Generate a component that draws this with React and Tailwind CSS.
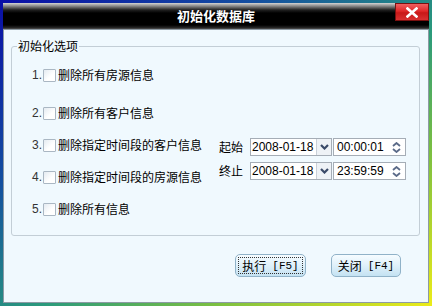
import React from "react";

const CJK = { fontFamily: '"Noto Sans CJK SC", "Liberation Sans", sans-serif' };

function Check() {
  return (
    <span className="ml-[1px] inline-block h-[13px] w-[13px] shrink-0 rounded-[1px] border border-[#aab7c3] bg-[linear-gradient(135deg,#e4ebf1,#ffffff_60%)]" />
  );
}

function Row({ n, text, className }) {
  return (
    <div className={"flex h-[20px] items-center " + (className || "")}>
      <span className="w-[10px] font-['Liberation_Sans'] text-[12px] text-[#333]">{n}.</span>
      <Check />
      <span className="ml-[2px] text-[12px] leading-[14px] text-black" style={CJK}>
        {text}
      </span>
    </div>
  );
}

function DateTime({ label, date, time }) {
  return (
    <div className="flex h-[18px] items-center">
      <span className="w-[31px] text-[12px] leading-[14px] text-black" style={CJK}>
        {label}
      </span>
      <div className="flex h-[18px] w-[82px] items-center border border-[#a5adb6] bg-white">
        <span className="flex-1 pl-[1px] font-['Liberation_Sans'] text-[12px] leading-[14px] text-black">{date}</span>
        <span className="flex h-full w-[15px] items-center justify-center border-l border-[#c9d0d8] bg-[#eef2f6]">
          <svg width="9" height="6" viewBox="0 0 9 6">
            <path d="M1 1 L4.5 4.5 L8 1" fill="none" stroke="#3a4a68" strokeWidth="2.2" />
          </svg>
        </span>
      </div>
      <div className="ml-[1px] flex h-[18px] w-[73px] items-center border border-[#a5adb6] bg-white">
        <span className="flex-1 pl-[3px] font-['Liberation_Sans'] text-[12px] leading-[14px] text-black">{time}</span>
        <span className="mr-[2px] flex h-full w-[13px] flex-col items-center justify-center gap-[1px]">
          <svg width="9" height="5" viewBox="0 0 9 5">
            <path d="M1 4 L4.5 1 L8 4" fill="none" stroke="#5a6a88" strokeWidth="1.8" />
          </svg>
          <svg width="9" height="5" viewBox="0 0 9 5">
            <path d="M1 1 L4.5 4 L8 1" fill="none" stroke="#5a6a88" strokeWidth="1.8" />
          </svg>
        </span>
      </div>
    </div>
  );
}

function Btn({ cjk, key_, focused, className }) {
  return (
    <button
      className={
        "flex h-[23px] items-center justify-center rounded-[5px] border border-[#90b2c8] bg-[linear-gradient(#f6fcff,#e2f2fb_45%,#c4e2f2)] p-[2px] " +
        className
      }
    >
      <span
        className={
          "flex h-full w-full items-center justify-center leading-[14px] text-black " +
          (focused ? "border border-dotted border-[#333]" : "border border-transparent")
        }
      >
        <span className="text-[12px]" style={CJK}>{cjk}</span>
        <span className="ml-[6px] font-['Liberation_Mono'] text-[11px]">{key_}</span>
      </span>
    </button>
  );
}

export default function App() {
  return (
    <div className="h-[306px] w-[432px] bg-[linear-gradient(to_bottom_right,#0a0ea6_0%,#1450a0_30%,#2a9a7c_55%,#7cc040_75%,#ecec18_100%)] p-[3px]">
      <div className="flex h-full flex-col">
        <div className="relative flex h-[26px] items-center justify-center bg-[linear-gradient(#d4d4d4_0px,#8a8a8a_3px,#202020_7px,#000000_10px,#000000_22px,#2a2a2a_25px,#5a5a5a_26px)]">
          <span className="pb-[1px] text-[13px] font-bold leading-[15px] text-white" style={CJK}>
            初始化数据库
          </span>
          <div className="absolute right-0 top-0 flex h-[18px] w-[34px] items-center justify-center border border-[#7a1010] bg-[linear-gradient(#f06060,#e02828_45%,#c81818_55%,#d83030)]">
            <svg width="12" height="11" viewBox="0 0 12 11">
              <path d="M1.5 1.5 L10.5 9.5 M10.5 1.5 L1.5 9.5" stroke="#ffffff" strokeWidth="2.6" strokeLinecap="square" />
            </svg>
          </div>
        </div>

        <div className="flex flex-1 flex-col border border-[#8d9aa4] bg-[#f0f9fe]">
          <fieldset className="ml-[7px] mr-[8px] mt-[9px] rounded-[3px] border border-[#c3ced6] px-0 pb-[16px] pt-0">
            <legend className="ml-[5px] px-[1px] text-[12px] leading-[14px] text-black" style={CJK}>
              初始化选项
            </legend>
            <div className="flex pl-[20px] pt-[12px]">
              <div className="flex w-[187px] flex-col">
                <Row n="1" text="删除所有房源信息" />
                <Row n="2" text="删除所有客户信息" className="mt-[18px]" />
                <Row n="3" text="删除指定时间段的客户信息" className="mt-[12px]" />
                <Row n="4" text="删除指定时间段的房源信息" className="mt-[12px]" />
                <Row n="5" text="删除所有信息" className="mt-[12px]" />
              </div>
              <div className="mt-[73px] flex flex-col gap-[6px]">
                <DateTime label="起始" date="2008-01-18" time="00:00:01" />
                <DateTime label="终止" date="2008-01-18" time="23:59:59" />
              </div>
            </div>
          </fieldset>
          <div className="mr-[27px] mt-[18px] flex justify-end gap-[25px]">
            <Btn focused cjk="执行" key_="[F5]" className="w-[71px]" />
            <Btn cjk="关闭" key_="[F4]" className="w-[70px]" />
          </div>
        </div>
      </div>
    </div>
  );
}
